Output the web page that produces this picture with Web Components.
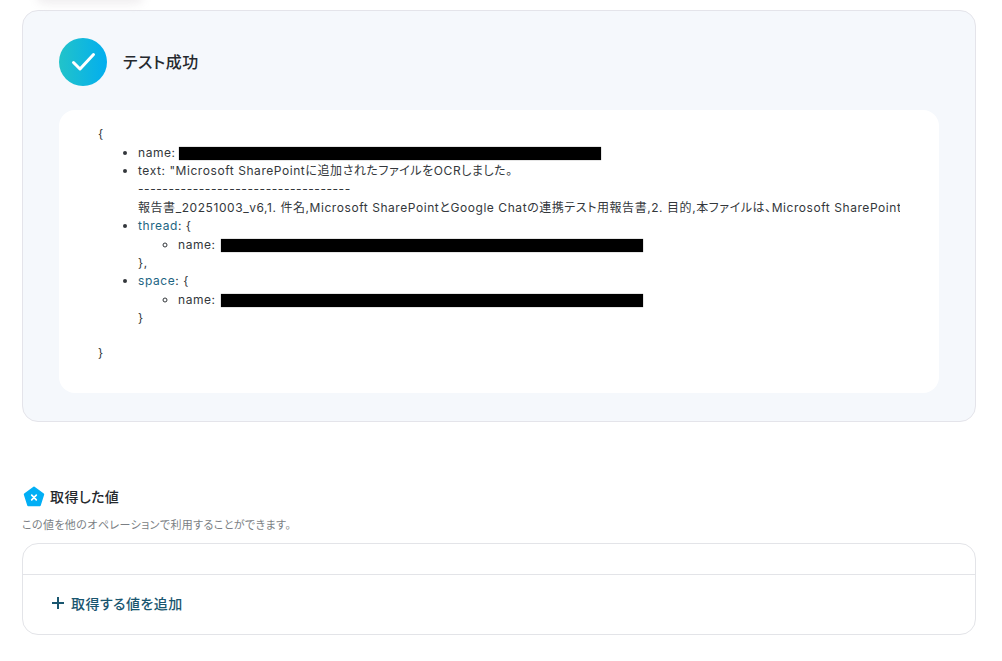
<!DOCTYPE html>
<html lang="ja"><head><meta charset="utf-8"><title>テスト成功</title>
<style>
html,body{margin:0;padding:0;background:#fff;height:661px;overflow:hidden}
body{font-family:Inter,"Noto Sans CJK JP",sans-serif;color:#23272b;font-feature-settings:"palt"}
</style></head><body>
<result-page></result-page>
<script>
function def(name,html){customElements.define(name,class extends HTMLElement{constructor(){super();this.attachShadow({mode:'open'}).innerHTML=html}})}
def('success-icon',`<style>:host{display:block;width:48px;height:48px;flex:none}svg{display:block}</style>
<svg width="48" height="48" viewBox="0 0 48 48"><defs><linearGradient id="g" x1="0" x2="1" y1="0" y2="0"><stop offset="0" stop-color="#22c3c9"/><stop offset="1" stop-color="#02aeef"/></linearGradient></defs><circle cx="24" cy="24" r="24" fill="url(#g)"/><path d="M14.5 24.5l6.5 6.5L34.5 16.5" fill="none" stroke="#fff" stroke-width="3" stroke-linecap="round" stroke-linejoin="round"/></svg>`);
def('redact-bar',`<style>:host{display:inline-block;width:422px;height:13px;margin-left:-1px;background:#000;vertical-align:-3px;box-shadow:0 0 1px #666}</style>`);
def('json-view',`<style>
:host{display:block;background:#fff;border-radius:16px;padding:15.2px 39px 30.8px;font-size:12px;line-height:18.4px;letter-spacing:.56px;color:#33373b}
.clip{overflow:hidden;white-space:nowrap}
ul{margin:0;padding:0 0 0 40px}
.top{margin-bottom:16px}
ul ul{list-style:circle}
ul ul redact-bar{margin-left:1px}
.k{color:#1d6583}
p{margin:0}
</style>
<div class="clip"><p>{</p>
<ul class="top">
<li>name: <redact-bar></redact-bar></li>
<li>text: "Microsoft SharePointに追加されたファイルをOCRしました。<br>-----------------------------------<br>報告書_20251003_v6,1. 件名,Microsoft SharePointとGoogle Chatの連携テスト用報告書,2. 目的,本ファイルは、Microsoft SharePoint</li>
<li><span class="k">thread</span>: {<ul><li>name: <redact-bar></redact-bar></li></ul>},</li>
<li><span class="k">space</span>: {<ul><li>name: <redact-bar></redact-bar></li></ul>}</li>
</ul>
<p>}</p></div>`);
def('test-card',`<style>
:host{display:block;background:#f5f8fc;border:1px solid #e4e4ea;border-radius:16px;padding:27px 36px 28px}
.head{display:flex;align-items:center;gap:16px;margin-bottom:24px}
h2{margin:0;font-size:16px;line-height:48px;font-weight:500;color:#25292e;letter-spacing:.5px}
</style>
<div class="head"><success-icon></success-icon><h2>テスト成功</h2></div>
<json-view></json-view>`);
def('values-panel',`<style>
:host{display:block}
.title{display:flex;align-items:center;gap:5px;height:24px;padding-left:1px}
svg{display:block;flex:none}
h3{margin:0;font-size:14px;font-weight:500;color:#25292e;line-height:24px;letter-spacing:.4px}
.note{margin:8px 0 10px;font-size:11px;line-height:16px;color:#7b7f84;letter-spacing:.4px}
.box{border:1px solid #e3e4e8;border-radius:16px;background:#fff}
.empty{height:30px;border-bottom:1px solid #e3e4e8}
.add{display:flex;align-items:center;gap:6px;height:57px;padding:0 0 2px 28px;color:#19566f;font-size:14px;font-weight:500;letter-spacing:.45px}
</style>
<div class="title"><svg width="22" height="22" viewBox="0 0 22 22"><path d="M11 1.6L20.2 8.4 16.8 19.2H5.2L1.8 8.4Z" fill="#02aff5" stroke="#02aff5" stroke-width="2" stroke-linejoin="round"/><path d="M8.7 9.2l4.6 4.6M13.3 9.2l-4.6 4.6" stroke="#fff" stroke-width="1.7" stroke-linecap="round"/></svg><h3>取得した値</h3></div>
<div class="note">この値を他のオペレーションで利用することができます。</div>
<div class="box"><div class="empty"></div><div class="add"><svg width="14" height="14" viewBox="0 0 14 14"><path d="M7 1v12M1 7h12" stroke="#19566f" stroke-width="2"/></svg><span>取得する値を追加</span></div></div>`);
def('result-page',`<style>
:host{display:block;position:relative;padding:10px 26px 0 22px;height:651px;box-sizing:content-box}
.shadow{position:absolute;left:38px;top:-14px;width:104px;height:14px;border-radius:8px;box-shadow:0 2px 10px 2px rgba(230,226,230,.6)}
values-panel{margin-top:63px}
</style>
<div class="shadow"></div>
<test-card></test-card>
<values-panel></values-panel>`);
</script>
</body></html>
